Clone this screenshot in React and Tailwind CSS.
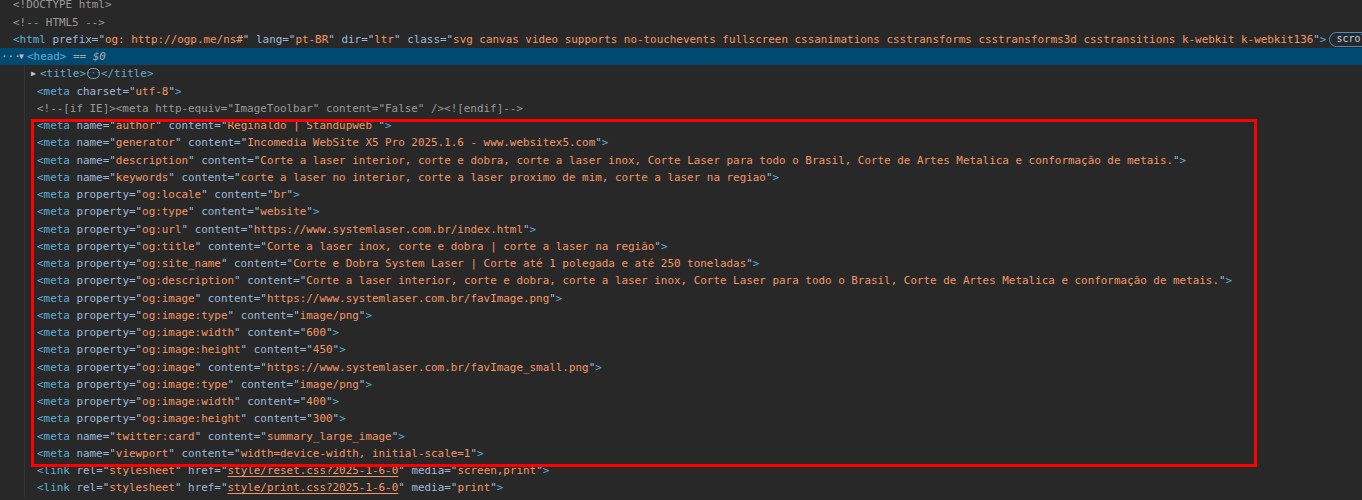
const T = ({ children }) => <span className="text-[#5db0d7]">{children}</span>;
const N = ({ children }) => <span className="text-[#9bbbdc]">{children}</span>;
const V = ({ children, link }) => (
  <span className={link ? 'text-[#f29766] underline underline-offset-2' : 'text-[#f29766]'}>{children}</span>
);

function Attr({ name, value, link }) {
  return (
    <>
      {' '}
      <N>{name}</N>
      <N>="</N>
      <V link={link}>{value}</V>
      <N>"</N>
    </>
  );
}

function Tag({ name, attrs }) {
  return (
    <span className="whitespace-pre">
      <T>{'<' + name}</T>
      {attrs.map(([n, v, link], i) => (
        <Attr key={i} name={n} value={v} link={link} />
      ))}
      <T>{'>'}</T>
    </span>
  );
}

const metas = [
  [['name', 'author'], ['content', 'Reginaldo | Standupweb ']],
  [['name', 'generator'], ['content', 'Incomedia WebSite X5 Pro 2025.1.6 - www.websitex5.com']],
  [['name', 'description'], ['content', 'Corte a laser interior, corte e dobra, corte a laser inox, Corte Laser para todo o Brasil, Corte de Artes Metalica e conformação de metais.']],
  [['name', 'keywords'], ['content', 'corte a laser no interior, corte a laser proximo de mim, corte a laser na regiao']],
  [['property', 'og:locale'], ['content', 'br']],
  [['property', 'og:type'], ['content', 'website']],
  [['property', 'og:url'], ['content', 'https://www.systemlaser.com.br/index.html']],
  [['property', 'og:title'], ['content', 'Corte a laser inox, corte e dobra | corte a laser na região']],
  [['property', 'og:site_name'], ['content', 'Corte e Dobra System Laser | Corte até 1 polegada e até 250 toneladas']],
  [['property', 'og:description'], ['content', 'Corte a laser interior, corte e dobra, corte a laser inox, Corte Laser para todo o Brasil, Corte de Artes Metalica e conformação de metais.']],
  [['property', 'og:image'], ['content', 'https://www.systemlaser.com.br/favImage.png']],
  [['property', 'og:image:type'], ['content', 'image/png']],
  [['property', 'og:image:width'], ['content', '600']],
  [['property', 'og:image:height'], ['content', '450']],
  [['property', 'og:image'], ['content', 'https://www.systemlaser.com.br/favImage_small.png']],
  [['property', 'og:image:type'], ['content', 'image/png']],
  [['property', 'og:image:width'], ['content', '400']],
  [['property', 'og:image:height'], ['content', '300']],
  [['name', 'twitter:card'], ['content', 'summary_large_image']],
  [['name', 'viewport'], ['content', 'width=device-width, initial-scale=1']],
];

const row = 'h-[17.25px] leading-[17.25px] whitespace-pre';

export default function App() {
  return (
    <div className="relative h-[500px] w-full overflow-hidden bg-[#282828] font-['DejaVu_Sans_Mono',monospace] text-[10.92px] text-[#cfcfcf]">
      <div className="-mt-[3.75px]">
        <div className={`${row} pl-[13px] text-[#9a9a9a]`}>{'<!DOCTYPE html>'}</div>
        <div className={`${row} pl-[13px] text-[#9a9a9a]`}>{'<!-- HTML5 -->'}</div>
        <div className={`${row} flex items-center pl-[13px]`}>
          <Tag
            name="html"
            attrs={[
              ['prefix', 'og: http://ogp.me/ns#'],
              ['lang', 'pt-BR'],
              ['dir', 'ltr'],
              ['class', 'svg canvas video supports no-touchevents fullscreen cssanimations csstransforms csstransforms3d csstransitions k-webkit k-webkit136'],
            ]}
          />
          <span className="ml-[3px] flex h-[15px] shrink-0 items-center rounded-full border border-[#3d8fcf] px-[6px] text-[10px] leading-none text-[#b9d3ea]">
            scroll
          </span>
        </div>
        <div className={`${row} flex items-center bg-[#004a72]`}>
          <span className="w-[19px] pl-[1px] text-[#bdbdbd]">···</span>
          <span className="w-[8px] text-[8px] text-[#bdbdbd]">▼</span>
          <T>{'<head>'}</T>
          <span className="text-[#a8a8a8]">{' == '}</span>
          <span className="italic text-[#a8a8a8]">$0</span>
        </div>
        <div className="ml-[24px] border-l border-[#353535]">
          <div className={`${row} flex items-center pl-[6px]`}>
            <span className="w-[9px] text-[8px] text-[#c4c4c4]">▶</span>
            <T>{'<title>'}</T>
            <span className="mx-[1px] flex h-[11px] w-[13px] items-center justify-center rounded-[6px] border border-[#5db0d7] text-[8px] leading-none text-[#5db0d7]">
              ···
            </span>
            <T>{'</title>'}</T>
          </div>
          <div className={`${row} pl-[12px]`}>
            <Tag name="meta" attrs={[['charset', 'utf-8']]} />
          </div>
          <div className={`${row} pl-[12px] text-[#9a9a9a]`}>
            {'<!--[if IE]><meta http-equiv="ImageToolbar" content="False" /><![endif]-->'}
          </div>
          {metas.map((attrs, i) => (
            <div key={i} className={`${row} pl-[12px]`}>
              <Tag name="meta" attrs={attrs} />
            </div>
          ))}
          <div className={`${row} pl-[12px]`}>
            <Tag
              name="link"
              attrs={[
                ['rel', 'stylesheet'],
                ['href', 'style/reset.css?2025-1-6-0', true],
                ['media', 'screen,print'],
              ]}
            />
          </div>
          <div className={`${row} pl-[12px]`}>
            <Tag
              name="link"
              attrs={[
                ['rel', 'stylesheet'],
                ['href', 'style/print.css?2025-1-6-0', true],
                ['media', 'print'],
              ]}
            />
          </div>
        </div>
      </div>
      <div className="pointer-events-none absolute left-[31px] top-[119px] h-[348px] w-[1226px] border-[3px] border-[#ff0000]" />
    </div>
  );
}
